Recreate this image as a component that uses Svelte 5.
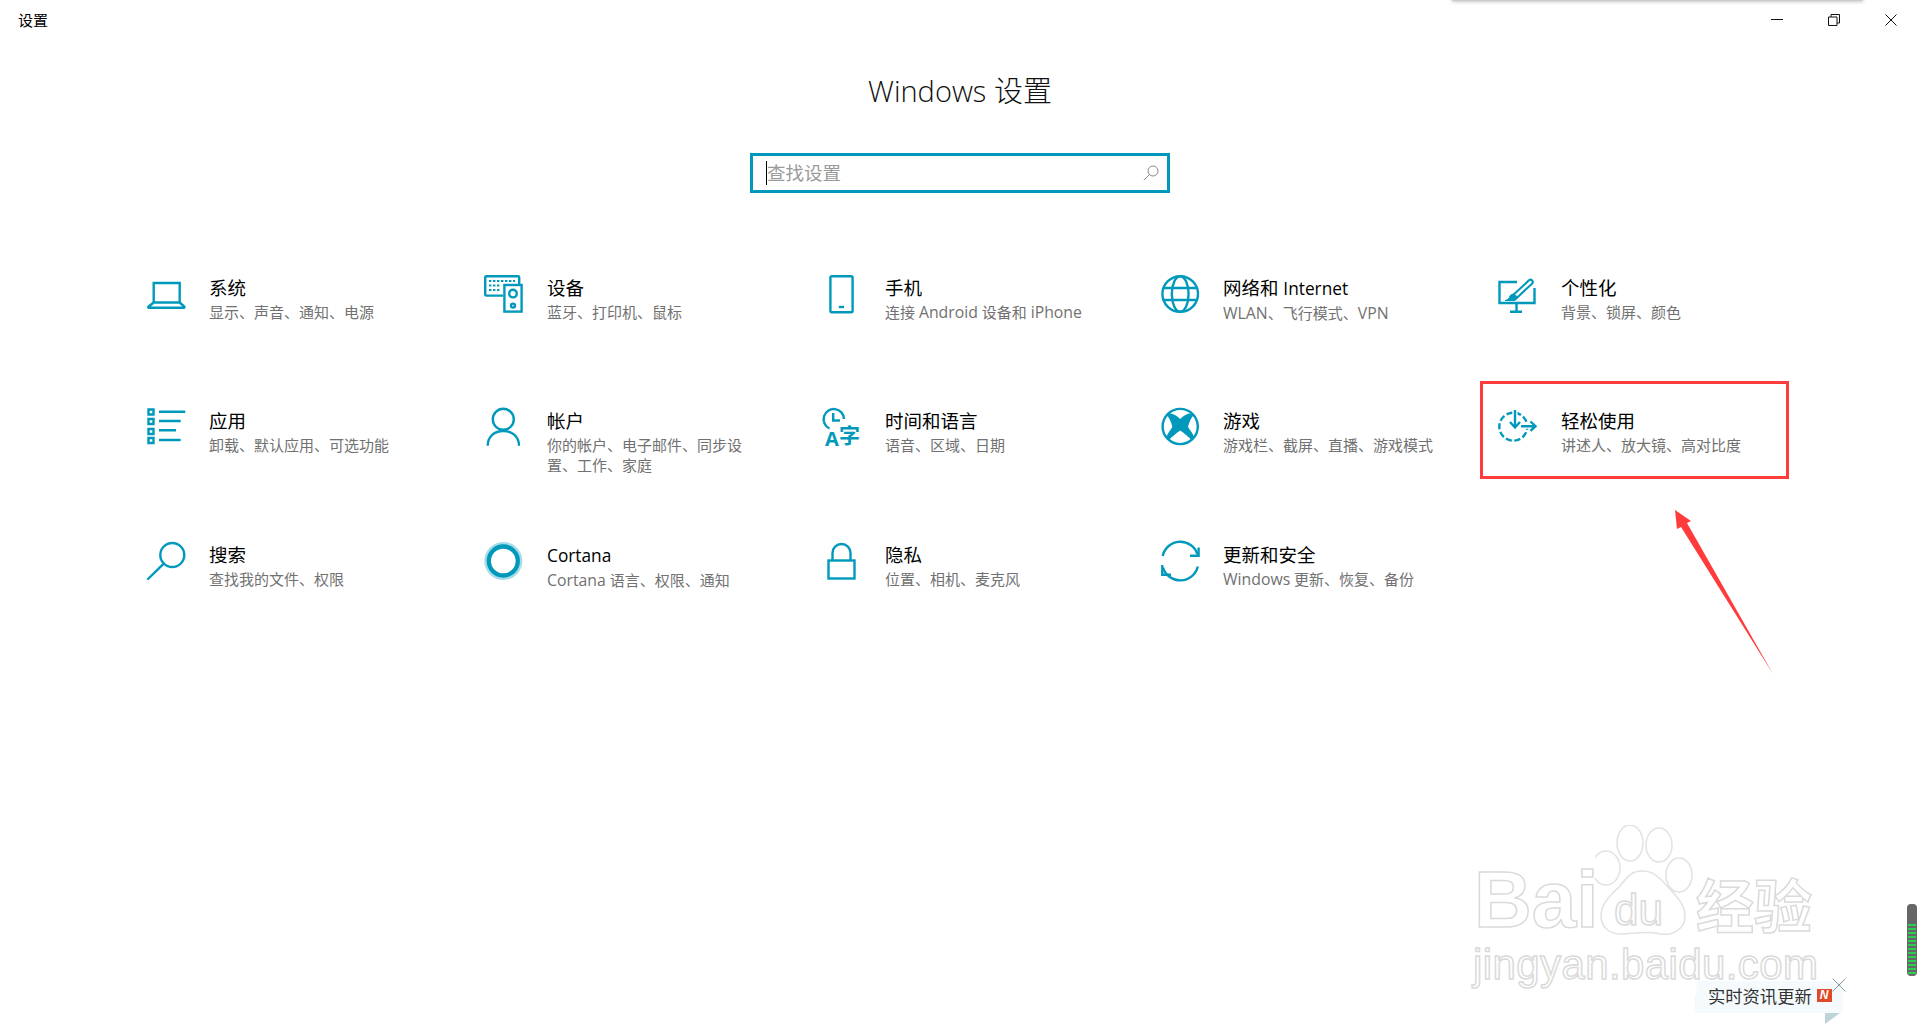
<script>
    // each icon is drawn in a 40x40 box, stroke colour comes from the svg
    const rows = [
        [
            { key: 'laptop', title: '系统', sub: '显示、声音、通知、电源' },
            { key: 'devices', title: '设备', sub: '蓝牙、打印机、鼠标' },
            { key: 'phone', title: '手机', sub: '连接 Android 设备和 iPhone' },
            { key: 'globe', title: '网络和 Internet', sub: 'WLAN、飞行模式、VPN' },
            { key: 'brush', title: '个性化', sub: '背景、锁屏、颜色' }
        ],
        [
            { key: 'apps', title: '应用', sub: '卸载、默认应用、可选功能' },
            { key: 'person', title: '帐户', sub: '你的帐户、电子邮件、同步设\n置、工作、家庭' },
            { key: 'time', title: '时间和语言', sub: '语音、区域、日期' },
            { key: 'xbox', title: '游戏', sub: '游戏栏、截屏、直播、游戏模式' },
            { key: 'ease', title: '轻松使用', sub: '讲述人、放大镜、高对比度' }
        ],
        [
            { key: 'search', title: '搜索', sub: '查找我的文件、权限' },
            { key: 'cortana', title: 'Cortana', sub: 'Cortana 语言、权限、通知' },
            { key: 'lock', title: '隐私', sub: '位置、相机、麦克风' },
            { key: 'sync', title: '更新和安全', sub: 'Windows 更新、恢复、备份' }
        ]
    ];
    const stripes = Array.from({ length: 13 }, (_, i) => i);

    // latin runs get their own size, the cjk font and the latin font don't line up otherwise
    function runs(text) {
        return text.split(/([A-Za-z]+)/).filter(Boolean);
    }
    const isLatin = (s) => /^[A-Za-z]/.test(s);
</script>

<div class="window">
    <header class="titlebar">
        <span class="titlebar__name">设置</span>
        <div class="controls">
            <svg width="12" height="12" viewBox="0 0 12 12"><path d="M0 5.5h12" stroke="#111" fill="none" /></svg>
            <svg width="12" height="12" viewBox="0 0 12 12"><path d="M.5 3h8.5v8.5H.5zM3 3V.5h8.5V9H9" stroke="#111" fill="none" /></svg>
            <svg width="12" height="12" viewBox="0 0 12 12"><path d="M.5.5l11 11M11.5.5l-11 11" stroke="#111" fill="none" /></svg>
        </div>
    </header>

    <h1 class="heading">Windows 设置</h1>

    <div class="search">
        <span class="search__caret"></span>
        <span class="search__text">查找设置</span>
        <svg class="search__icon" width="16" height="16" viewBox="0 0 16 16" fill="none" stroke="#8a8a8a">
            <circle cx="10" cy="6" r="5" />
            <path d="M6.5 9.5L.8 15.2" />
        </svg>
    </div>

    <main class="grid">
        {#each rows as row, r}
            <div class="row" class:row--first={r === 0} class:row--second={r === 1}>
                {#each row as item}
                    <div class="item">
                        <svg class="item__icon" width="40" height="40" viewBox="0 0 40 40" fill="none" stroke="#0099bc" stroke-width="2.4">
                            {#if item.key === 'laptop'}
                                <path d="M6.7 27.5V8h26v19.5" />
                                <path d="M6.7 27.5h26l4.6 4.2c.5.6.2 1-.5 1H1.9c-.7 0-1-.4-.5-1z" />
                            {:else if item.key === 'devices'}
                                <g transform="translate(-1 0)">
                                    <path d="M19 20.6H2.4A1.2 1.2 0 0 1 1.2 19.4V2.4A1.2 1.2 0 0 1 2.4 1.2H34a1.2 1.2 0 0 1 1.2 1.2V9" />
                                    <rect x="20.4" y="10" width="17.2" height="26.6" />
                                    <circle cx="29" cy="18.6" r="3.8" />
                                    <circle cx="29" cy="30.6" r="2" />
                                    <path d="M5 6h26M5 10.5h12M5 15h12" stroke-width="2" stroke-dasharray="2.4 1.6" />
                                </g>
                            {:else if item.key === 'phone'}
                                <rect x="7.4" y="1.2" width="22.2" height="36" rx="1.4" />
                                <path d="M15.8 32h5.2" />
                            {:else if item.key === 'globe'}
                                <circle cx="19.2" cy="19" r="17.8" />
                                <ellipse cx="19.2" cy="19" rx="8.4" ry="17.8" />
                                <path d="M3 13h32.4M3 25h32.4" />
                            {:else if item.key === 'brush'}
                                <path d="M18 7H.5v21h35V13M17.5 28v8M11 36.7h12" />
                                <path d="M16.5 21L31.5 7" stroke-width="6.5" stroke-linecap="round" />
                                <path d="M16.5 21L31.5 7" stroke="#fff" stroke-width="2.4" stroke-linecap="round" />
                                <path d="M6 25.5h9c2.5-.4 3.5-2 3-4l-3.5-2.6c-3 .4-3.8 2-4 3.5C9.5 24 8 25 6 25.5z" fill="#0099bc" stroke-width="1" />
                            {:else if item.key === 'apps'}
                                <path d="M1.5 2.5h5v5h-5zM1.5 12h5v5h-5zM1.5 22h5v5h-5zM1.5 31h5v5h-5z" />
                                <path d="M12 4.7h26.3M12 14h21.7M12 23.3h17M12 33h21.7" />
                            {:else if item.key === 'person'}
                                <circle cx="18.3" cy="12.3" r="10.5" />
                                <path d="M2.7 38.7C2.7 29.5 9.5 24 18.3 24S34 29.5 34 38.7" />
                            {:else if item.key === 'time'}
                                <path d="M6.5 21.5A10.2 10.2 0 1 1 21 12" />
                                <path d="M10.2 6v7.5h6.8" />
                                <text x="2" y="38.5" class="icon-text icon-text--a">A</text>
                                <text x="16" y="35.5" class="icon-text icon-text--zi">字</text>
                            {:else if item.key === 'xbox'}
                                <circle cx="19.2" cy="19.5" r="17.6" />
                                <path d="M5 7C10 5 15 8 19.2 12 23.4 8 28 5 33.4 7 30 11 28 15 27 20 29.5 23.5 32 27 33.5 31L31 33.5C27 29.5 23 26 19.2 23.5 15.4 26 11.4 29.5 7.4 33.5L4.9 31C6.4 27 8.9 23.5 11.4 20 10.4 15 8.4 11 5 7z" fill="#0099bc" stroke="none" />
                            {:else if item.key === 'ease'}
                                <circle cx="14.3" cy="19.7" r="14" stroke-dasharray="6.2 2.6" stroke-dashoffset="3" />
                                <path d="M16 3v17M10.5 15.5l5.5 6 5.5-6" stroke="#fff" stroke-width="5" />
                                <path d="M16 3v17M11 15l5 5.5 5-5.5" />
                                <path d="M22 19.2h14M31.5 14.5l5 4.7-5 4.7" stroke="#fff" stroke-width="5" />
                                <path d="M22 19.2h14M31.5 14.5l5 4.7-5 4.7" />
                            {:else if item.key === 'search'}
                                <circle cx="25.3" cy="13" r="12" />
                                <path d="M16.5 21.8L1 37" stroke-linecap="round" />
                            {:else if item.key === 'cortana'}
                                <circle cx="18.3" cy="19" r="17.5" stroke-width="3" opacity=".35" />
                                <circle cx="18.3" cy="19" r="14.5" stroke-width="4.3" />
                            {:else if item.key === 'lock'}
                                <rect x="5.5" y="18.5" width="26" height="18" />
                                <path d="M9.5 18.5V11a9 9 0 0 1 18 0v7.5" />
                            {:else if item.key === 'sync'}
                                <path d="M1.7 14A18 18 0 0 1 36.5 12.5" />
                                <path d="M37.6 5.5v8.2H29" />
                                <path d="M36.8 24.5A18 18 0 0 1 2 25.5" />
                                <path d="M1.3 23v9.8h8.7" />
                            {/if}
                        </svg>
                        <div class="item__text">
                            <div class="item__title">
                                {#each runs(item.title) as part}<span class:item__latin={isLatin(part)}>{part}</span>{/each}
                            </div>
                            <div class="item__sub">
                                {#each runs(item.sub) as part}<span class:item__latin={isLatin(part)}>{part}</span>{/each}
                            </div>
                        </div>
                    </div>
                {/each}
            </div>
        {/each}
    </main>

    <!-- things pasted on top of the screenshot -->
    <div class="shade"></div>
    <div class="mark"></div>
    <svg class="arrow" width="110" height="170" viewBox="1670 507 110 170">
        <path d="M1675 510L1691 521L1687 523L1773 674L1681 527L1677 529z" fill="#ff3b3b" />
    </svg>

    <svg class="paw" width="100" height="110" viewBox="1595 825 100 110" fill="#fff" stroke="#e2e2e2" stroke-width="1.5">
        <ellipse cx="1606" cy="868" rx="14" ry="17" />
        <ellipse cx="1630" cy="843" rx="13" ry="18" />
        <ellipse cx="1659" cy="845" rx="13" ry="17" />
        <ellipse cx="1679" cy="875" rx="13" ry="17" />
        <path d="M1642 871c-12 0-16 8-22 15-8 8-19 17-19 30 0 13 11 19 23 18 12-1 24-3 36 0 13 2 25-5 25-18 0-13-10-21-18-30-7-7-12-15-25-15z" />
    </svg>
    <span class="wm wm--bai">Bai</span>
    <span class="wm wm--du">du</span>
    <span class="wm wm--jy">经验</span>
    <span class="wm wm--url">jingyan.baidu.com</span>

    <div class="news">
        <span class="news__text">实时资讯更新</span>
        <span class="news__badge">N</span>
    </div>
    <div class="news-fold"></div>
    <svg class="news-close" width="14" height="14" viewBox="0 0 14 14">
        <path d="M.5.5l13 13M13.5.5l-13 13" stroke="#8a9a9e" fill="none" />
    </svg>

    <div class="meter">
        <div class="meter__bars">
            {#each stripes as s (s)}
                <span class="meter__bar"></span>
            {/each}
        </div>
    </div>
</div>

<style>
    :global(body) {
        background: #fff;
    }

    .window {
        position: relative;
        height: 1030px;
        overflow: hidden;
        font-family: "Open Sans", "Noto Sans CJK SC", sans-serif;
        background: #fff;
        color: #000;
    }

    .titlebar {
        display: flex;
        align-items: center;
        justify-content: space-between;
        height: 40px;
        padding: 0 23px 0 18px;
    }

    .titlebar__name {
        font-size: 15px;
        margin-bottom: 2px;
    }

    .controls {
        display: flex;
        gap: 45px;
    }

    .heading {
        margin: 31px 0 0;
        font-size: 29px;
        line-height: 40px;
        font-weight: 300;
        text-align: center;
        color: #111;
    }

    .search {
        position: relative;
        display: flex;
        align-items: center;
        box-sizing: border-box;
        width: 420px;
        height: 40px;
        margin: 42px auto 0;
        padding: 0 8px 0 13px;
        border: 3px solid #0099bc;
    }

    .search__caret {
        width: 1px;
        height: 24px;
        background: #000;
    }

    .search__text {
        flex: 1;
        margin-bottom: 2px;
        font-size: 18.5px;
        color: #9a9a9a;
    }

    .grid {
        display: flex;
        flex-direction: column;
        margin-top: 82px;
        padding-left: 147px;
    }

    .row {
        display: flex;
        height: 135px;
    }

    .row--first {
        height: 132px;
    }

    .item {
        display: flex;
        width: 338px;
    }

    .item__icon {
        flex: none;
        overflow: visible;
    }

    .item__text {
        margin-left: 22px;
        margin-top: 1px;
    }

    .row--second .item__text {
        margin-top: 2px;
    }

    .item__title {
        font-size: 18.5px;
        line-height: 24px;
    }

    .item__title .item__latin {
        font-size: 17.3px;
    }

    .item__sub {
        margin-top: 2px;
        font-size: 15px;
        line-height: 20px;
        color: #717171;
        white-space: pre-line;
    }

    .item__sub .item__latin {
        font-size: 15.8px;
    }

    .icon-text {
        font-family: "Open Sans", "Noto Sans CJK SC", sans-serif;
        fill: #0099bc;
        stroke: none;
        font-weight: 700;
    }

    .icon-text--a {
        font-size: 20px;
    }

    .icon-text--zi {
        font-size: 21px;
    }

    .shade {
        position: absolute;
        left: 1452px;
        top: -3px;
        width: 411px;
        height: 4px;
        background: #ccc;
        box-shadow: 0 0 4px rgba(0, 0, 0, .35);
    }

    .mark {
        position: absolute;
        left: 1480px;
        top: 381px;
        box-sizing: border-box;
        width: 309px;
        height: 98px;
        border: 3px solid #ff3b3b;
    }

    .arrow {
        position: absolute;
        left: 1670px;
        top: 507px;
    }

    .paw {
        position: absolute;
        left: 1595px;
        top: 825px;
    }

    .wm {
        position: absolute;
        font-family: "Liberation Sans", sans-serif;
        color: #fff;
        -webkit-text-stroke: 1.5px #dadada;
        white-space: nowrap;
    }

    .wm--bai {
        left: 1474px;
        top: 858px;
        font-size: 80px;
        line-height: 84px;
        font-weight: 700;
    }

    .wm--du {
        left: 1614px;
        top: 885px;
        font-size: 44px;
        line-height: 50px;
    }

    .wm--jy {
        left: 1696px;
        top: 868px;
        font-family: "Noto Sans CJK SC", sans-serif;
        font-size: 58px;
        line-height: 70px;
        font-weight: 700;
    }

    .wm--url {
        left: 1473px;
        top: 948px;
        font-size: 42px;
        line-height: 34px;
        letter-spacing: .4px;
    }

    .news {
        position: absolute;
        left: 1695px;
        top: 981px;
        display: flex;
        align-items: center;
        gap: 5px;
        box-sizing: border-box;
        width: 148px;
        height: 32px;
        padding: 0 0 3px 13px;
        background: #f5fbfd;
        box-shadow: 0 2px 3px rgba(0, 0, 0, .22);
        clip-path: polygon(2px 0, 100% 0, 100% 100%, 0 100%, 0 80%);
        font-family: "Noto Sans CJK SC", sans-serif;
    }

    .news__text {
        font-size: 17.3px;
        line-height: 22px;
        color: #333;
    }

    .news__badge {
        width: 15px;
        height: 13px;
        background: #e0492a;
        color: #fff;
        font: italic 700 12px/13px "Liberation Sans", sans-serif;
        text-align: center;
    }

    .news-fold {
        position: absolute;
        left: 1825px;
        top: 1013px;
        width: 15px;
        height: 11px;
        background: #bcd3d8;
        clip-path: polygon(0 0, 100% 0, 0 100%);
    }

    .news-close {
        position: absolute;
        left: 1832px;
        top: 978px;
    }

    .meter {
        position: absolute;
        left: 1907px;
        top: 904px;
        box-sizing: border-box;
        display: flex;
        align-items: flex-end;
        width: 10px;
        height: 72px;
        padding: 0 1px 2px;
        background: #666;
        border-radius: 4px;
    }

    .meter__bars {
        display: flex;
        flex-direction: column;
        gap: 2px;
        width: 100%;
    }

    .meter__bar {
        height: 2px;
        background: #2ecc55;
    }
</style>
